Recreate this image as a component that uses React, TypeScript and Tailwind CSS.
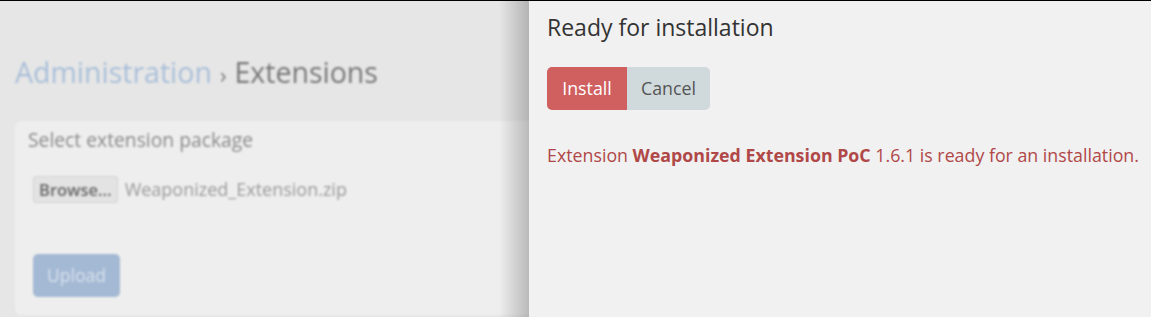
const App = () => {
  return (
    <div
      className="flex h-[317px] w-[1151px] overflow-hidden border-t border-black bg-[#e6e6e6]"
      style={{ fontFamily: '"Open Sans", sans-serif' }}
    >
      <div className="relative w-[529px] shrink-0 overflow-hidden">
        <div className="w-[600px] blur-[1.2px]">
          <h1 className="pl-[15px] pt-[51px] text-[28.5px] leading-[40px] text-[#777777]">
            <span className="text-[#a9bfd9]">Administration</span>
            <span className="mx-[8px] text-[22px]">›</span>
            <span>Extensions</span>
          </h1>
          <div className="ml-[15px] mt-[27px] h-[194px] rounded-[6px] bg-[#eeeeee] px-[13px] pt-[6px]">
            <p className="text-[19.3px] leading-[26px] text-[#8a8a8a]">Select extension package</p>
            <div className="ml-[5px] mt-[23px] flex items-center gap-[7px]">
              <span className="rounded-[3px] border border-[#d2d2d2] bg-[#e3e3e3] px-[5px] text-[16.5px] font-semibold leading-[25px] text-[#666666]">
                Browse...
              </span>
              <span className="text-[18px] text-[#9a9a9a]">Weaponized_Extension.zip</span>
            </div>
            <button className="ml-[5px] mt-[51px] h-[43px] w-[87px] rounded-[5px] bg-[#a4b9d4] text-[17.5px] text-[#d8e2ee]">
              Upload
            </button>
          </div>
        </div>
        <div className="pointer-events-none absolute inset-y-0 right-0 w-[30px] bg-gradient-to-r from-transparent to-[rgba(0,0,0,0.22)]" />
      </div>
      <div className="flex-1 bg-[#f1f1f1] pl-[18px]">
        <h2 className="pt-[11px] text-[23px] leading-[30px] text-[#333333]">Ready for installation</h2>
        <div className="mt-[25px] flex">
          <button className="h-[43px] w-[80px] rounded-l-[5px] bg-[#d06060] text-[17.8px] text-white">Install</button>
          <button className="h-[43px] w-[83px] rounded-r-[5px] bg-[#d0d9dc] text-[17.8px] text-[#555555]">Cancel</button>
        </div>
        <p className="mt-[33px] text-[17.8px] leading-[24px] text-[#b04848]">
          Extension <strong className="font-bold">Weaponized Extension PoC</strong> 1.6.1 is ready for an installation.
        </p>
      </div>
    </div>
  );
};

export default App;
